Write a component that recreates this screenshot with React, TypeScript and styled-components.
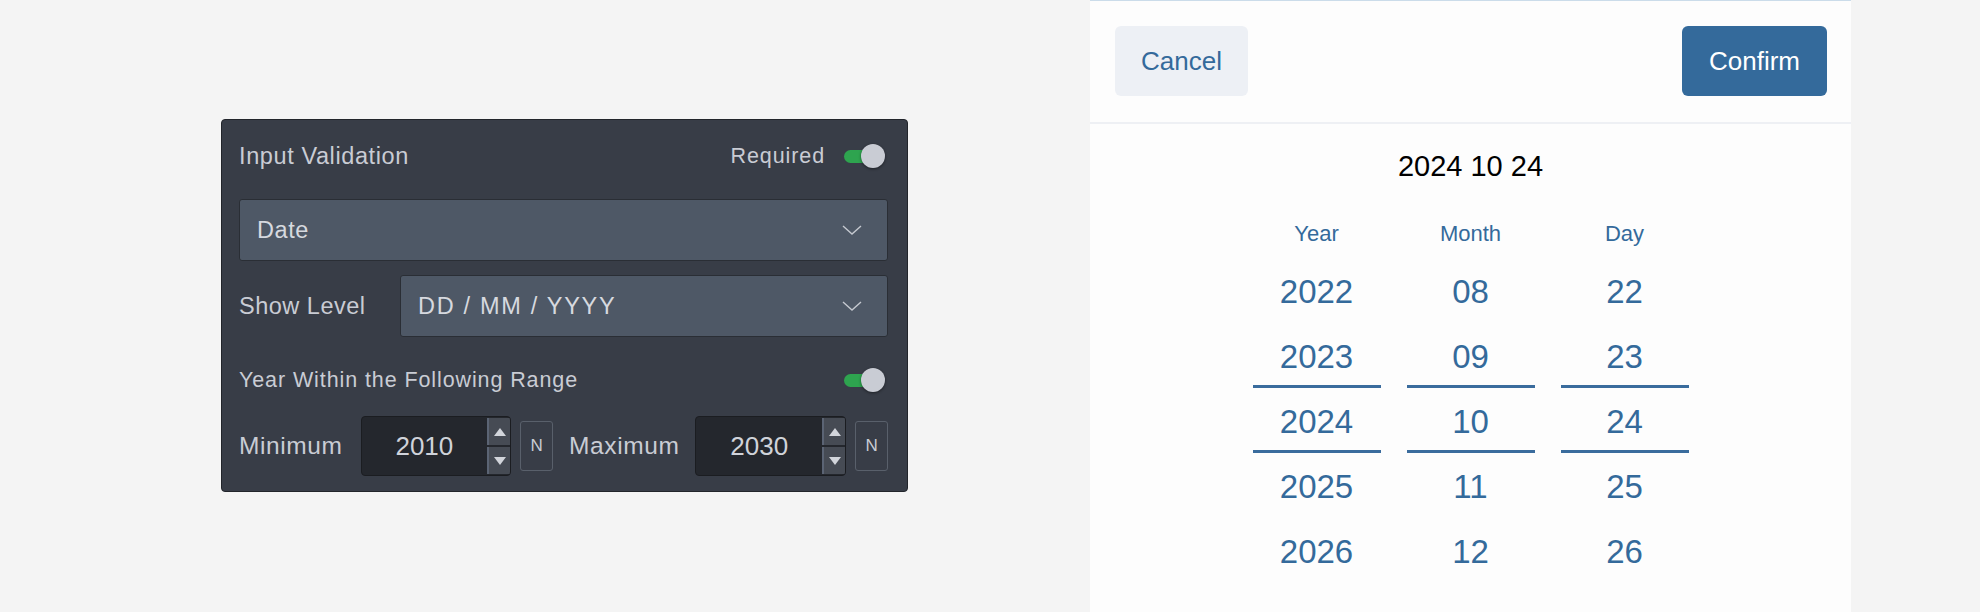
import React from 'react';
import styled, { createGlobalStyle } from 'styled-components';

const GlobalStyle = createGlobalStyle`
    html, body {
        margin: 0;
        padding: 0;
        background: #f4f4f4;
    }
    body {
        font-family: "Liberation Sans", Arial, sans-serif;
    }
`;

const Page = styled.div`
    display: flex;
    width: 1980px;
    height: 612px;
    overflow: hidden;
    background: #f4f4f4;
`;

const EditorArea = styled.div`
    width: 1090px;
    flex-shrink: 0;
    box-sizing: border-box;
    padding: 119px 0 0 221px;
`;

const Panel = styled.div`
    width: 687px;
    box-sizing: border-box;
    display: flex;
    flex-direction: column;
    padding: 0 19px 15px 17px;
    background: #383d47;
    border: 1px solid #22252b;
    border-radius: 4px;
    color: #c9ccd4;
`;

const HeaderRow = styled.div`
    height: 72px;
    display: flex;
    align-items: center;
    justify-content: space-between;
`;

const RangeRow = styled(HeaderRow)`
    height: 38px;
    margin-top: 24px;
`;

const SmallLabel = styled.span`
    font-size: 21.5px;
    letter-spacing: 0.9px;
    color: #c9ccd4;
`;

const TitleLabel = styled(SmallLabel)`
    font-size: 23.5px;
    letter-spacing: 0.6px;
`;

const FieldLabel = styled.span<{ $width?: number }>`
    flex-shrink: 0;
    font-size: 23.5px;
    letter-spacing: 0.5px;
    color: #c9ccd4;
    ${p => (p.$width ? `width: ${p.$width}px;` : '')}
`;

const SwitchGroup = styled.div`
    display: flex;
    align-items: center;
    gap: 19px;
`;

const Switch = styled.div`
    position: relative;
    width: 41px;
    height: 24px;
    margin-right: 3px;
`;

const SwitchTrack = styled.div`
    position: absolute;
    left: 0;
    top: 6px;
    width: 34px;
    height: 13px;
    border-radius: 7px;
    background: #2ea44f;
`;

const SwitchThumb = styled.div`
    position: absolute;
    right: 0;
    top: 0;
    width: 24px;
    height: 24px;
    border-radius: 50%;
    background: #c9ccd4;
    box-shadow: 0 1px 3px rgba(0, 0, 0, 0.45);
`;

const Select = styled.div`
    flex: 1;
    height: 62px;
    box-sizing: border-box;
    display: flex;
    align-items: center;
    justify-content: space-between;
    padding: 0 25px 0 17px;
    background: #4e5866;
    border: 1px solid #2a2e35;
    border-radius: 3px;
    color: #d6d9df;
    font-size: 23.5px;
`;

const TopSelect = styled(Select)`
    flex: none;
    margin-top: 7px;
`;

const SelectValue = styled.span<{ $spaced?: boolean }>`
    letter-spacing: ${p => (p.$spaced ? '1.7px' : '0.6px')};
`;

const FieldRow = styled.div`
    display: flex;
    align-items: center;
    margin-top: 14px;
`;

const NumberRow = styled.div`
    height: 60px;
    margin-top: 17px;
    display: flex;
    align-items: center;
`;

const NumberBox = styled.div`
    flex: 1;
    height: 60px;
    box-sizing: border-box;
    display: flex;
    background: #24272d;
    border: 1px solid #1b1d21;
    border-radius: 4px;
    overflow: hidden;
`;

const NumberValue = styled.div`
    flex: 1;
    display: flex;
    align-items: center;
    justify-content: center;
    font-size: 26px;
    color: #d0d3da;
`;

const Spinner = styled.div`
    width: 23px;
    display: flex;
    flex-direction: column;
    gap: 2px;
    padding: 1px 0;
`;

const SpinButton = styled.div`
    flex: 1;
    display: flex;
    align-items: center;
    justify-content: center;
    background: #464b54;
    border-left: 2px solid #5b6474;
    box-sizing: border-box;
`;

const NButton = styled.div`
    width: 33px;
    height: 50px;
    flex-shrink: 0;
    box-sizing: border-box;
    margin-left: 9px;
    display: flex;
    align-items: center;
    justify-content: center;
    border: 1px solid #59606b;
    border-radius: 3px;
    font-size: 17px;
    color: #c9ccd4;
`;

const RangeLabel = styled(FieldLabel)`
    font-size: 24.5px;
    letter-spacing: 0.6px;
`;

const MinLabel = styled(RangeLabel)`
    margin-right: 18px;
`;

const MaxLabel = styled(RangeLabel)`
    margin: 0 16px;
`;

const PickerPanel = styled.div`
    width: 761px;
    height: 612px;
    flex-shrink: 0;
    box-sizing: border-box;
    background: #fdfdfd;
    border-top: 1px solid #cbdcea;
    display: flex;
    flex-direction: column;
`;

const PickerHeader = styled.div`
    height: 123px;
    box-sizing: border-box;
    display: flex;
    align-items: flex-start;
    justify-content: space-between;
    padding: 25px 24px 0 25px;
    border-bottom: 2px solid #eef0f4;
`;

const PickerButton = styled.button<{ $primary?: boolean }>`
    height: 70px;
    width: ${p => (p.$primary ? 145 : 133)}px;
    border: none;
    border-radius: 6px;
    font-family: "Liberation Sans", Arial, sans-serif;
    font-size: 26px;
    background: ${p => (p.$primary ? '#346a9b' : '#edf0f5')};
    color: ${p => (p.$primary ? '#ffffff' : '#346a9b')};
    padding: 0;
    cursor: pointer;
`;

const PickerTitle = styled.div`
    padding-top: 22px;
    line-height: 40px;
    font-size: 29px;
    color: #000;
    text-align: center;
`;

const Wheels = styled.div`
    display: flex;
    justify-content: center;
    gap: 26px;
    margin-top: 33px;
`;

const WheelColumn = styled.div`
    width: 128px;
    display: flex;
    flex-direction: column;
    align-items: stretch;
`;

const WheelHeader = styled.div`
    line-height: 30px;
    font-size: 22px;
    color: #346a9b;
    text-align: center;
    margin-bottom: 10px;
`;

const WheelItem = styled.div<{ $selected?: boolean }>`
    position: relative;
    height: 65px;
    line-height: 65px;
    font-size: 33px;
    color: #346a9b;
    text-align: center;

    ${p =>
        p.$selected
            ? `
        &::before,
        &::after {
            content: '';
            position: absolute;
            left: 0;
            right: 0;
            height: 3px;
            background: #3a6c9d;
        }
        &::before { top: -4px; }
        &::after { bottom: 1px; }
    `
            : ''}
`;

const Chevron = () => (
    <svg width="20" height="10" viewBox="0 0 20 10" fill="none">
        <polyline points="1,1 10,9 19,1" stroke="#c5c9d0" strokeWidth="1.4" />
    </svg>
);

const Triangle: React.FC<{ up?: boolean }> = ({ up }) => (
    <svg width="12" height="8" viewBox="0 0 12 8">
        <polygon points={up ? '6,0 12,8 0,8' : '0,0 12,0 6,8'} fill="#d2d5db" />
    </svg>
);

const Toggle = () => (
    <Switch>
        <SwitchTrack />
        <SwitchThumb />
    </Switch>
);

const YearInput: React.FC<{ value: number }> = ({ value }) => (
    <NumberBox>
        <NumberValue>{value}</NumberValue>
        <Spinner>
            <SpinButton>
                <Triangle up />
            </SpinButton>
            <SpinButton>
                <Triangle />
            </SpinButton>
        </Spinner>
    </NumberBox>
);

const wheels = [
    { title: 'Year', items: ['2022', '2023', '2024', '2025', '2026'] },
    { title: 'Month', items: ['08', '09', '10', '11', '12'] },
    { title: 'Day', items: ['22', '23', '24', '25', '26'] }
];

export default function App() {
    return (
        <Page>
            <GlobalStyle />
            <EditorArea>
                <Panel>
                    <HeaderRow>
                        <TitleLabel>Input Validation</TitleLabel>
                        <SwitchGroup>
                            <SmallLabel>Required</SmallLabel>
                            <Toggle />
                        </SwitchGroup>
                    </HeaderRow>
                    <TopSelect>
                        <SelectValue>Date</SelectValue>
                        <Chevron />
                    </TopSelect>
                    <FieldRow>
                        <FieldLabel $width={161}>Show Level</FieldLabel>
                        <Select>
                            <SelectValue $spaced>DD / MM / YYYY</SelectValue>
                            <Chevron />
                        </Select>
                    </FieldRow>
                    <RangeRow>
                        <SmallLabel>Year Within the Following Range</SmallLabel>
                        <Toggle />
                    </RangeRow>
                    <NumberRow>
                        <MinLabel>Minimum</MinLabel>
                        <YearInput value={2010} />
                        <NButton>N</NButton>
                        <MaxLabel>Maximum</MaxLabel>
                        <YearInput value={2030} />
                        <NButton>N</NButton>
                    </NumberRow>
                </Panel>
            </EditorArea>
            <PickerPanel>
                <PickerHeader>
                    <PickerButton>Cancel</PickerButton>
                    <PickerButton $primary>Confirm</PickerButton>
                </PickerHeader>
                <PickerTitle>2024 10 24</PickerTitle>
                <Wheels>
                    {wheels.map(w => (
                        <WheelColumn key={w.title}>
                            <WheelHeader>{w.title}</WheelHeader>
                            {w.items.map((item, i) => (
                                <WheelItem key={item} $selected={i === 2}>
                                    {item}
                                </WheelItem>
                            ))}
                        </WheelColumn>
                    ))}
                </Wheels>
            </PickerPanel>
        </Page>
    );
}
